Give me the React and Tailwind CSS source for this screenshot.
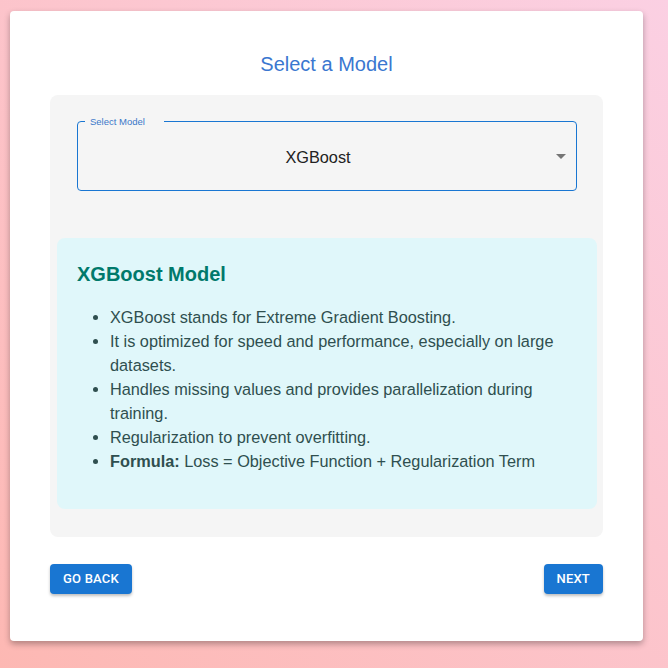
import React from 'react';

// ── Model info ───────────────────────────────────────────────────────────────

const POINTS = [
  'XGBoost stands for Extreme Gradient Boosting.',
  'It is optimized for speed and performance, especially on large datasets.',
  'Handles missing values and provides parallelization during training.',
  'Regularization to prevent overfitting.',
];

function ModelSelect({ value }) {
  return (
    <div className="relative mx-[20px] h-[70px] rounded-[4px] border border-[#1976d2]">
      <span className="absolute left-[7px] top-[-6px] w-[79px] bg-[#f5f5f5] px-[5px] text-[9.5px] leading-[11px] text-[#3b78c9]">
        Select Model
      </span>
      <div className="flex h-full items-center justify-center pl-[14px] pr-[32px] pt-[2px] text-[16.3px] text-[#222]">
        {value}
      </div>
      <svg
        viewBox="0 0 24 24"
        className="absolute right-[3px] top-1/2 h-6 w-6 -translate-y-1/2 fill-[#757575]"
      >
        <path d="M7 10l5 5 5-5z" />
      </svg>
    </div>
  );
}

function Button({ children }) {
  return (
    <button className="h-[30px] rounded-[4px] bg-[#1976d2] px-[13px] font-['Roboto',sans-serif] text-[13px] font-medium uppercase tracking-[0.2px] text-white shadow-[0_2px_3px_rgba(0,0,0,0.25)]">
      {children}
    </button>
  );
}

export default function App() {
  return (
    <div className="min-h-screen bg-linear-to-tr from-[#fdb8b3] to-[#fbd0e3] pl-[10px] pt-[11px] font-['Liberation_Sans',Arial,sans-serif]">
      <div className="h-[630px] w-[633px] rounded-[4px] bg-white px-[40px] pt-[41px] shadow-[0_3px_6px_rgba(0,0,0,0.3)]">
        <h1 className="text-center text-[20px] leading-[24px] text-[#3a77d0]">Select a Model</h1>

        <div className="mt-[19px] rounded-[8px] bg-[#f5f5f5] pb-[28px] pl-[7px] pr-[6px] pt-[26px]">
          <ModelSelect value="XGBoost" />

          <div className="mt-[47px] rounded-[8px] bg-[#e0f7fa] px-[20px] pb-[36px] pt-[24px]">
            <h2 className="text-[20px] font-bold leading-[24px] text-[#00796b]">XGBoost Model</h2>
            <ul className="mt-[19px] list-disc pl-[33px] text-[16.3px] leading-[24px] text-[#2f4f4f]">
              {POINTS.map((p) => (
                <li key={p}>{p}</li>
              ))}
              <li>
                <strong>Formula:</strong> Loss = Objective Function + Regularization Term
              </li>
            </ul>
          </div>
        </div>

        <div className="mt-[27px] flex justify-between">
          <Button>Go Back</Button>
          <Button>Next</Button>
        </div>
      </div>
    </div>
  );
}
